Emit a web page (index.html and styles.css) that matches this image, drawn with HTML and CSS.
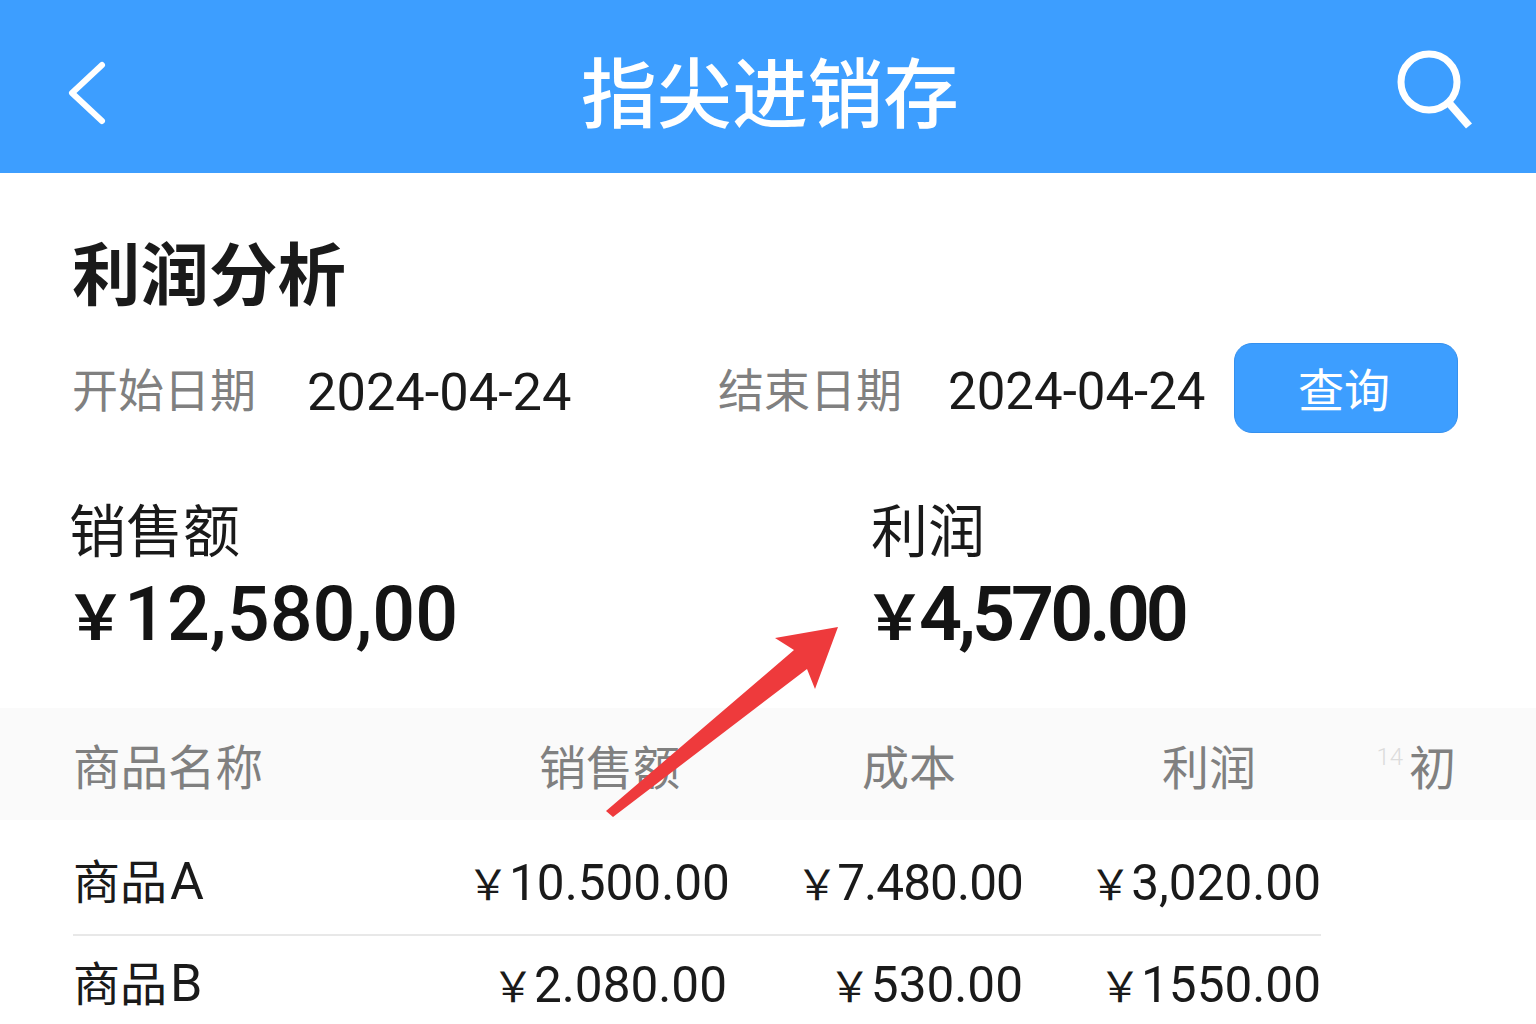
FILE: index.html
```html
<!DOCTYPE html>
<html lang="zh-CN">
<head>
  <meta charset="UTF-8">
  <meta name="viewport" content="width=device-width, initial-scale=1.0">
  <title>指尖进销存</title>
  <link rel="stylesheet" href="styles.css">
</head>
<body>
  <div class="app">
    <div class="top-bar">
      <svg class="top-icon" width="60" height="80" viewBox="0 0 60 80">
        <path d="M43 13 L13 41 L43 69" fill="none" stroke="#fff" stroke-width="6" stroke-linecap="round" stroke-linejoin="round"/>
      </svg>
      <span class="top-title">指尖进销存</span>
      <svg class="top-icon icon-search" width="90" height="90" viewBox="0 0 90 90">
        <circle cx="38" cy="39" r="28" fill="none" stroke="#fff" stroke-width="7"/>
        <path d="M58 60 L78 83" fill="none" stroke="#fff" stroke-width="8"/>
      </svg>
    </div>

    <div class="content">
      <h1 class="page-title">利润分析</h1>

      <div class="filter-row">
        <span class="filter-label">开始日期</span>
        <span class="filter-date date-start">2024-04-24</span>
        <span class="filter-label">结束日期</span>
        <span class="filter-date date-end">2024-04-24</span>
        <button class="query-btn">查询</button>
      </div>

      <div class="stats">
        <div class="stat stat-sales">
          <div class="stat-label">销售额</div>
          <div class="stat-value value-sales"><span class="yen">￥</span>12,580,00</div>
        </div>
        <div class="stat">
          <div class="stat-label">利润</div>
          <div class="stat-value value-profit"><span class="yen">￥</span>4,570.00</div>
        </div>
      </div>
    </div>

    <div class="table-head">
      <span class="head-name">商品名称</span>
      <span>销售额</span>
      <span>成本</span>
      <span>利润</span>
      <span><sup class="ghost">14</sup>初</span>
    </div>

    <div class="table-row row-line">
      <span class="cell-name">商品<span class="sku">A</span></span>
      <span><span class="yen">￥</span>10.500.00</span>
      <span class="cell-tight"><span class="yen">￥</span>7.480.00</span>
      <span><span class="yen">￥</span>3,020.00</span>
    </div>
    <div class="table-row row-last">
      <span class="cell-name">商品<span class="sku">B</span></span>
      <span><span class="yen">￥</span>2.080.00</span>
      <span><span class="yen">￥</span>530.00</span>
      <span><span class="yen">￥</span>1550.00</span>
    </div>

    <!-- red annotation arrow on top of the page -->
    <svg class="arrow" width="1536" height="1024" viewBox="0 0 1536 1024">
      <polygon points="838,627 775,638 794,650 606,811 613,817 807,669 815,689" fill="#ee3a3c"/>
    </svg>
  </div>
</body>
</html>
```

FILE: styles.css
```css
* { margin: 0; padding: 0; box-sizing: border-box; }
html, body { height: 100%; }
body { font-family: Roboto, "Noto Sans CJK SC", sans-serif; background: #fff; color: #1a1a1a; overflow: hidden; }
.app { position: relative; width: 1536px; height: 1024px; overflow: hidden; background: #fff; }

.top-bar { height: 173px; background: #3d9eff; display: flex; align-items: center; justify-content: space-between; padding: 10px 55px 0 59px; position: relative; }
.top-icon { display: block; }
.icon-search { margin-top: -7px; }
.top-title { position: absolute; left: 581px; top: 50%; transform: translateY(-50%); margin-top: 3px; font-family: "Noto Sans CJK SC", sans-serif; font-size: 75.6px; line-height: 1; font-weight: 500; color: #fff; white-space: nowrap; }

.content { height: 535px; padding: 58px 78px 0 72px; }
.page-title { font-family: "Noto Sans CJK SC", sans-serif; font-size: 68.5px; line-height: 80px; font-weight: 700; color: #1a1a1a; }

.filter-row { display: flex; align-items: center; height: 90px; margin-top: 32px; }
.filter-label { font-family: "Noto Sans CJK SC", sans-serif; font-size: 46px; color: #808080; white-space: nowrap; margin-top: -2px; }
.filter-date { font-size: 52.4px; color: #1a1a1a; white-space: nowrap; margin-top: 7px; }
.date-start { margin-left: 51px; width: 411px; }
.date-end { margin-left: 46px; font-size: 51px; }
.query-btn { width: 224px; height: 90px; margin-left: auto; background: #3d9eff; color: #fff; border: 1px solid #3590ee; border-radius: 18px; padding: 0 4px 3px 0; font-family: "Noto Sans CJK SC", sans-serif; font-size: 46px; }

.stats { display: flex; margin-top: 56px; }
.stat-sales { width: 799px; }
.stat-sales .stat-label { margin-left: -3px; }
.stat-label { font-family: "Noto Sans CJK SC", sans-serif; font-size: 57px; line-height: 76px; color: #1a1a1a; }
.stat-value { font-size: 75.5px; line-height: 90px; margin-top: 4px; color: #141414; }
.stat-value .yen { font-family: "Noto Sans CJK SC", sans-serif; font-size: 61px; font-weight: 700; margin-left: -7px; margin-right: -2px; }
.value-sales { font-weight: 500; }
.value-profit { font-weight: 600; letter-spacing: -4px; }

.table-head { height: 112px; background: #fafafa; display: grid; grid-template-columns: 1fr 240px 276px 300px 200px; padding: 0 80px 0 73px; align-items: center; text-align: right; font-family: "Noto Sans CJK SC", sans-serif; font-size: 47px; color: #808080; }
.table-head .head-name { text-align: left; font-size: 47.5px; }
.ghost { font-size: 24px; color: #dcdcdc; font-family: Roboto, sans-serif; font-weight: 300; margin-right: 6px; vertical-align: 20px; line-height: 0; }

.table-row { display: grid; grid-template-columns: 1fr 260px 296px 298px; margin: 0 215px 0 73px; height: 98px; align-items: center; text-align: right; font-size: 49.5px; color: #1a1a1a; white-space: nowrap; }
.row-line { height: 107px; margin-top: 9px; border-bottom: 2px solid #e8e8e8; }
.row-last { height: 94px; }
.table-row .cell-name { text-align: left; font-family: "Noto Sans CJK SC", sans-serif; font-size: 47px; margin-top: -6px; }
.table-row .sku { font-family: Roboto, sans-serif; font-size: 52px; margin-left: 3px; }
.table-row .yen { font-family: "Noto Sans CJK SC", sans-serif; font-size: 42px; }
.cell-tight { letter-spacing: -0.9px; }

.arrow { position: absolute; left: 0; top: 0; pointer-events: none; }
```
